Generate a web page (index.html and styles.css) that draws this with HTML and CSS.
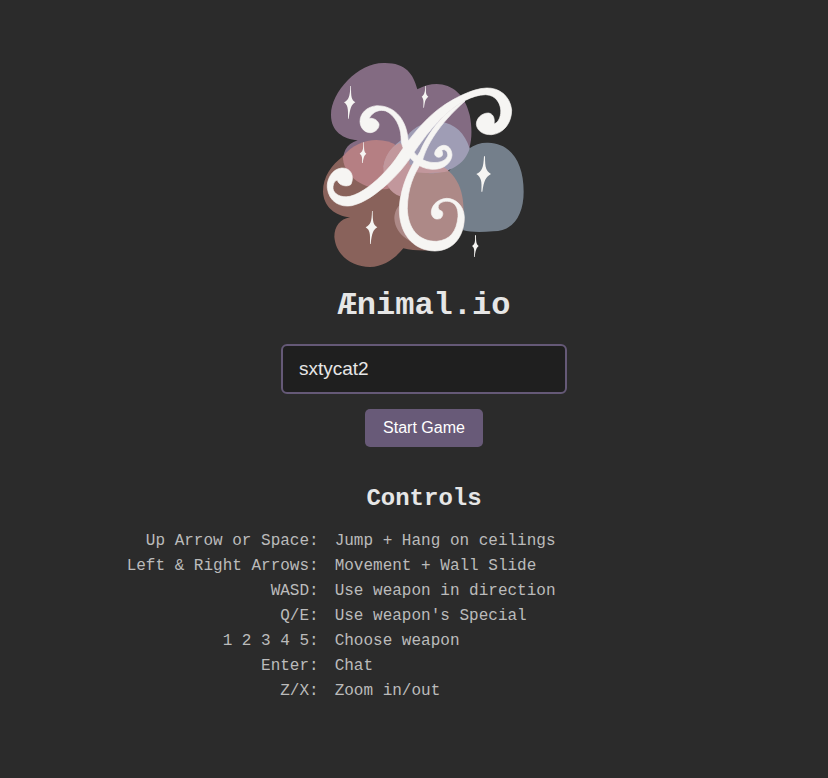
FILE: index.html
```
<!DOCTYPE html>
<html lang="en">
<head>
    <meta charset="UTF-8">
    <meta name="viewport" content="width=device-width, initial-scale=1.0">
    <title>Ænimal.io</title>
    <link rel="stylesheet" href="styles.css">
</head>
<body>
    <main class="menu">
        <svg class="logo" viewBox="-3 0 660 660" role="img" aria-label="Ænimal.io logo">
            <!-- paint blobs -->
            <path fill="#747f8b" d="M400 350 L460 282 C480 267 500 262 520 263 C590 265 626 325 626 410 C626 480 595 528 535 529 C500 532 465 532 445 526 Z"/>
            <path fill="#836b82" d="M128 256 C85 252 48 230 48 180 C48 110 130 24 205 24 C270 22 295 55 307 103 C375 65 445 95 464 180 C471 215 472 250 463 280 L300 350 L84 330 C82 295 92 267 128 256 Z"/>
            <path fill="#89625b" d="M84 304 C50 330 24 365 24 410 C26 455 60 482 105 487 C75 492 58 515 58 545 C62 600 110 636 165 636 C210 635 245 605 265 580 C290 588 330 586 360 586 L400 420 L280 350 L280 330 Z"/>
            <path fill="#b57f83" d="M84 304 C110 270 150 255 184 255 C235 255 270 280 284 330 C280 375 240 404 200 403 C135 400 82 355 84 304 Z"/>
            <path fill="#ad8987" d="M330 325 C390 320 442 370 445 450 L448 500 C440 555 410 582 340 580 C300 570 240 545 238 490 C238 475 244 460 252 452 L255 424 C275 370 300 335 330 325 Z"/>
            <path fill="#9f9db5" d="M205 335 C215 285 250 258 275 245 C300 210 340 198 375 200 C420 205 450 235 464 280 C450 330 400 355 345 355 Z"/>
            <path fill="#c2979c" d="M205 335 C212 290 240 268 255 264 C275 282 284 305 284 330 L330 322 C365 321 385 334 402 348 C365 357 325 354 290 350 L255 424 C225 412 205 385 205 335 Z"/>

            <!-- letter swashes -->
            <g class="swash">
                <path d="M108 388 C120 360 105 338 80 339 C50 342 34 375 37 400 C42 440 75 458 110 452 C150 443 185 415 215 389 C245 362 268 335 285 310 C315 265 350 215 395 175 C430 145 470 120 512 119 C545 120 560 150 557 175 C555 192 548 203 537 207 C540 190 535 176 520 174 C500 174 484 190 484 208 C486 228 505 240 530 239 C565 236 590 205 590 165 C585 120 550 98 515 99 C470 100 410 135 385 152 C340 182 300 230 272 268 C250 300 235 325 212 348 C180 383 140 415 105 424 C75 430 55 415 54 400 C54 385 60 376 67 376 C72 393 98 397 108 388 Z"/>
                <path d="M162 190 C175 168 195 163 212 168 C240 180 257 215 258 245 C258 262 262 280 275 295 C290 315 310 340 350 343 C390 345 410 320 411 300 C410 282 400 270 385 271 C368 273 358 288 359 298 C363 311 382 309 383 297 C383 291 380 286 380 286 C388 280 400 288 398 303 C390 325 350 328 325 315 C300 303 290 282 280 260 C278 240 275 212 255 185 C235 160 210 152 185 152 C155 155 135 175 135 200 C136 220 150 234 168 233 C185 230 193 218 192 207 C188 195 175 188 162 190 Z"/>
                <path d="M450 138 C400 160 345 220 315 290 C290 330 255 390 253 465 C253 530 290 587 360 588 C420 586 448 540 448 485 C446 450 420 430 395 430 C365 432 347 455 349 475 C352 492 365 495 377 490 C385 482 385 473 380 468 C372 466 368 460 370 452 C375 440 395 436 408 441 C425 448 430 465 429 485 C425 530 405 555 365 559 C310 560 278 520 277 460 C278 400 295 360 322 318 C335 270 370 210 450 138 Z"/>
            </g>

            <!-- sparkles -->
            <g fill="#f6f5f3">
                <path d="M106 93 L108 93 C108 125 109 134 121 142 C108 150 106 160 101 191 L99 191 C100 160 98 150 87 142 C101 135 105 125 106 93 Z"/>
                <path d="M331 93 L333 93 C332 115 333 120 340 125 C332 132 330 135 327 158 L325 158 C326 137 326 132 320 125 C328 119 330 113 331 93 Z"/>
                <path d="M145 262 L147 262 C147 285 147 291 154 296 C147 302 146 307 143 324 L141 324 C142 307 141 301 134 296 C143 290 145 285 145 262 Z"/>
                <path d="M507 304 L510 304 C510 339 513 348 528 357 C512 367 507 376 502 410 L499 410 C501 378 499 368 484 357 C501 349 505 340 507 304 Z"/>
                <path d="M171 468 L173 468 C173 502 175 509 187 517 C174 526 171 533 167 567 L165 567 C166 535 165 526 152 517 C167 508 170 501 171 468 Z"/>
                <path d="M480 541 L483 541 C483 561 484 568 491 573 C484 579 482 585 479 606 L477 606 C478 585 479 579 471 573 C479 568 481 562 480 541 Z"/>
            </g>
        </svg>

        <h1 class="title">Ænimal.io</h1>

        <form class="start-form">
            <input class="name-input" type="text" value="sxtycat2" aria-label="Player name">
            <button class="start-button" type="button">Start Game</button>
        </form>

        <h2 class="subtitle">Controls</h2>
        <dl class="controls">
            <dt>Up Arrow or Space:</dt>
            <dd>Jump + Hang on ceilings</dd>
            <dt>Left &amp; Right Arrows:</dt>
            <dd>Movement + Wall Slide</dd>
            <dt>WASD:</dt>
            <dd>Use weapon in direction</dd>
            <dt>Q/E:</dt>
            <dd>Use weapon's Special</dd>
            <dt>1 2 3 4 5:</dt>
            <dd>Choose weapon</dd>
            <dt>Enter:</dt>
            <dd>Chat</dd>
            <dt>Z/X:</dt>
            <dd>Zoom in/out</dd>
        </dl>
    </main>
</body>
</html>
```
FILE: styles.css
```
* {
    box-sizing: border-box;
}

body {
    margin: 0;
    background-color: #2b2b2b;
    color: #e6e6e6;
    font-family: "Liberation Mono", "Courier New", monospace;
    font-size: 16px;
}

.menu {
    display: flex;
    flex-direction: column;
    align-items: center;
    padding: 55px 0 55px 20px;
}

.logo {
    width: 220px;
    height: 220px;
}

.swash {
    fill: #f6f5f3;
    stroke: #f6f5f3;
    stroke-width: 2px;
}

.title {
    margin: 13px 0 20px;
    font-size: 32px;
    line-height: 36px;
}

.start-form {
    display: flex;
    flex-direction: column;
    align-items: center;
    gap: 15px;
}

.name-input {
    width: 286px;
    height: 50px;
    padding: 0 16px;
    border: 2px solid #655977;
    border-radius: 6px;
    outline: none;
    background-color: #1f1f1f;
    color: #e6e6e6;
    font-family: "Liberation Sans", Arial, sans-serif;
    font-size: 19px;
}

.start-button {
    padding: 10px 18px;
    border: none;
    border-radius: 5px;
    background-color: #685a78;
    color: #ffffff;
    font-family: "Liberation Sans", Arial, sans-serif;
    font-size: 16px;
    line-height: 18px;
    cursor: pointer;
}

.subtitle {
    margin: 38px 0 20px;
    font-size: 24px;
    line-height: 28px;
}

/* key on the left, action on the right */
.controls {
    display: grid;
    grid-template-columns: 1fr 2fr;
    gap: 8px 16px;
    width: 100%;
    max-width: 600px;
    margin: 0;
    color: #bbbbbb;
    line-height: 17px;
}

.controls dt {
    text-align: right;
}

.controls dd {
    margin: 0;
}
```
